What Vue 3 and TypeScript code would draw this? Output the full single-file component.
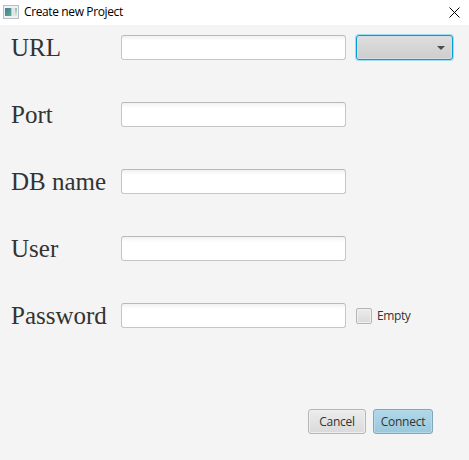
<script setup lang="ts">
import { ref } from 'vue'

interface Field {
  key: string
  label: string
}

const fields: Field[] = [
  { key: 'url', label: 'URL' },
  { key: 'port', label: 'Port' },
  { key: 'db', label: 'DB name' },
  { key: 'user', label: 'User' },
  { key: 'password', label: 'Password' },
]

const values = ref<Record<string, string>>({ url: '', port: '', db: '', user: '', password: '' })
const empty = ref(false)
</script>

<template>
  <div class="window">
    <header class="titlebar">
      <svg class="app-icon" width="16" height="14" viewBox="0 0 16 14">
        <defs>
          <linearGradient id="pane" x1="0" y1="0" x2="1" y2="1">
            <stop offset="0" stop-color="#4a74aa" />
            <stop offset="1" stop-color="#56b080" />
          </linearGradient>
          <linearGradient id="side" x1="0" y1="0" x2="0" y2="1">
            <stop offset="0" stop-color="#8fc0ac" />
            <stop offset="1" stop-color="#e4e8ec" />
          </linearGradient>
        </defs>
        <rect x="0.5" y="0.5" width="15" height="13" fill="#eff1f2" stroke="#b9bec2" />
        <rect x="2" y="3" width="6" height="8" fill="url(#pane)" />
        <rect x="8" y="3" width="1" height="8" fill="#b4ccd0" />
        <rect x="9" y="3" width="3" height="8" fill="#e3e7ea" />
        <rect x="12" y="3" width="2" height="8" fill="url(#side)" />
      </svg>
      <span class="title">Create new Project</span>
      <svg class="close" width="11" height="11" viewBox="0 0 11 11">
        <path d="M0.5 0.5 L10.5 10.5 M10.5 0.5 L0.5 10.5" stroke="#000" stroke-width="1" fill="none" />
      </svg>
    </header>
    <main class="form">
      <div v-for="f in fields" :key="f.key" class="row">
        <label class="label" :for="f.key">{{ f.label }}</label>
        <input :id="f.key" v-model="values[f.key]" class="field" type="text" />
        <button v-if="f.key === 'url'" class="combo" type="button">
          <svg width="8" height="4" viewBox="0 0 8 4"><path d="M0 0 H8 L4 4 Z" fill="#4c4c4c" /></svg>
        </button>
        <label v-if="f.key === 'password'" class="check">
          <input v-model="empty" class="box" type="checkbox" />
          <span class="check-text">Empty</span>
        </label>
      </div>
    </main>
    <footer class="actions">
      <button class="btn cancel" type="button"><span>Cancel</span></button>
      <button class="btn connect" type="button"><span>Connect</span></button>
    </footer>
  </div>
</template>

<style>
body {
  margin: 0;
  background: #f4f4f4;
}
</style>

<style scoped>
.window {
  width: 469px;
  height: 460px;
  box-sizing: border-box;
  background: #f4f4f4;
  font-family: 'Open Sans', 'Noto Sans', sans-serif;
  font-size: 12px;
  color: #333;
  overflow: hidden;
}
.titlebar {
  display: flex;
  align-items: center;
  box-sizing: border-box;
  height: 25px;
  padding: 0 9px 1px 3px;
  background: #fff;
  color: #000;
}
.title {
  margin-left: 5px;
  line-height: 24px;
  height: 24px;
  letter-spacing: -0.38px;
  white-space: nowrap;
}
.close {
  margin-left: auto;
  margin-top: 1px;
}
.form {
  display: flex;
  flex-direction: column;
  gap: 42px;
  padding: 10px 0 0 11px;
}
.row {
  display: flex;
  align-items: center;
  height: 25px;
}
.label {
  width: 110px;
  font: 25px/25px 'Liberation Serif', serif;
  white-space: nowrap;
}
.field {
  box-sizing: border-box;
  width: 225px;
  height: 25px;
  padding: 0 7px;
  border: 1px solid #c6c6c6;
  border-top-color: #b9b9b9;
  border-radius: 3px;
  background: linear-gradient(#f1f1f1, #fff 5px);
  outline: none;
  font: inherit;
}
.combo {
  display: flex;
  align-items: center;
  justify-content: flex-end;
  box-sizing: border-box;
  width: 97px;
  height: 25px;
  margin-left: 10px;
  padding: 0 7px 0 0;
  border: 1px solid #039ed3;
  border-radius: 3px;
  background: linear-gradient(#dedede, #cdcdcd);
  box-shadow: 0 0 0 1px #a0dcf1, inset 0 0 0 1px #d3dfe4;
}
.check {
  display: flex;
  align-items: center;
  margin-left: 10px;
}
.box {
  appearance: none;
  box-sizing: border-box;
  width: 16px;
  height: 16px;
  margin: 0;
  border: 1px solid #b5b5b5;
  border-radius: 2px;
  background: linear-gradient(#ececec, #dadada);
  box-shadow: inset 0 0 0 1px #f0f0f0;
}
.check-text {
  margin-left: 5px;
  letter-spacing: -0.4px;
}
.actions {
  display: flex;
  justify-content: flex-end;
  gap: 7px;
  padding: 81px 36px 0 0;
}
.btn {
  box-sizing: border-box;
  height: 25px;
  padding: 0;
  border: 1px solid #b5b5b5;
  border-radius: 3px;
  font: inherit;
  line-height: 23px;
  color: #333;
  letter-spacing: -0.25px;
}
.cancel {
  width: 58px;
  background: linear-gradient(#ececec, #dadada);
  box-shadow: inset 0 0 0 1px #efefef;
}
.connect {
  width: 60px;
  border-color: #82a7b8;
  background: linear-gradient(#b0d8ea, #9bc8dc);
  box-shadow: inset 0 0 0 1px #b4d9e9;
}
</style>
